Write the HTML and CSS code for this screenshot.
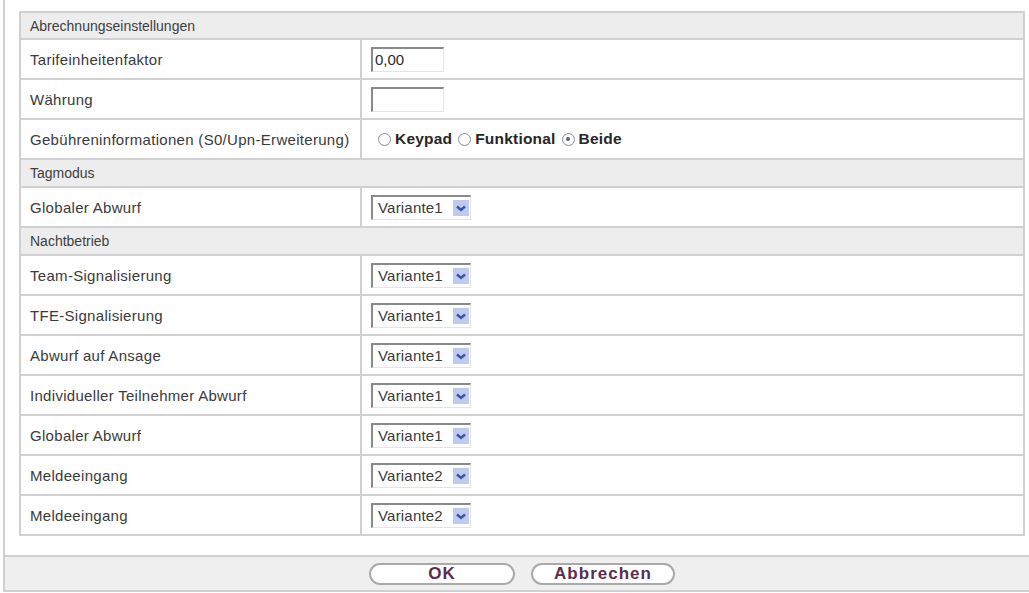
FILE: index.html
```html
<!DOCTYPE html>
<html lang="de">
<head>
<meta charset="utf-8">
<title>Abrechnungseinstellungen</title>
<link rel="stylesheet" href="styles.css">
</head>
<body>
<div class="frame">
  <div class="panel">
    <div class="form">
      <div class="section">Abrechnungseinstellungen</div>
      <div class="row">
        <div class="label">Tarifeinheitenfaktor</div>
        <div class="value"><input class="field" type="text" value="0,00"></div>
      </div>
      <div class="row">
        <div class="label">Währung</div>
        <div class="value"><input class="field" type="text" value=""></div>
      </div>
      <div class="row">
        <div class="label">Gebühreninformationen (S0/Upn-Erweiterung)</div>
        <div class="value">
          <div class="radios">
            <span class="option"><span class="radio"></span>Keypad</span>
            <span class="option"><span class="radio"></span>Funktional</span>
            <span class="option"><span class="radio checked"></span>Beide</span>
          </div>
        </div>
      </div>

      <div class="section">Tagmodus</div>
      <div class="row">
        <div class="label">Globaler Abwurf</div>
        <div class="value"><div class="select"><span>Variante1</span><span class="arrow"><svg width="16" height="16" viewBox="0 0 16 16"><path d="M4 6.5 L8 10 L12 6.5" fill="none" stroke="#3557a8" stroke-width="2.4"/></svg></span></div></div>
      </div>

      <div class="section">Nachtbetrieb</div>
      <div class="row">
        <div class="label">Team-Signalisierung</div>
        <div class="value"><div class="select"><span>Variante1</span><span class="arrow"><svg width="16" height="16" viewBox="0 0 16 16"><path d="M4 6.5 L8 10 L12 6.5" fill="none" stroke="#3557a8" stroke-width="2.4"/></svg></span></div></div>
      </div>
      <div class="row">
        <div class="label">TFE-Signalisierung</div>
        <div class="value"><div class="select"><span>Variante1</span><span class="arrow"><svg width="16" height="16" viewBox="0 0 16 16"><path d="M4 6.5 L8 10 L12 6.5" fill="none" stroke="#3557a8" stroke-width="2.4"/></svg></span></div></div>
      </div>
      <div class="row">
        <div class="label">Abwurf auf Ansage</div>
        <div class="value"><div class="select"><span>Variante1</span><span class="arrow"><svg width="16" height="16" viewBox="0 0 16 16"><path d="M4 6.5 L8 10 L12 6.5" fill="none" stroke="#3557a8" stroke-width="2.4"/></svg></span></div></div>
      </div>
      <div class="row">
        <div class="label">Individueller Teilnehmer Abwurf</div>
        <div class="value"><div class="select"><span>Variante1</span><span class="arrow"><svg width="16" height="16" viewBox="0 0 16 16"><path d="M4 6.5 L8 10 L12 6.5" fill="none" stroke="#3557a8" stroke-width="2.4"/></svg></span></div></div>
      </div>
      <div class="row">
        <div class="label">Globaler Abwurf</div>
        <div class="value"><div class="select"><span>Variante1</span><span class="arrow"><svg width="16" height="16" viewBox="0 0 16 16"><path d="M4 6.5 L8 10 L12 6.5" fill="none" stroke="#3557a8" stroke-width="2.4"/></svg></span></div></div>
      </div>
      <div class="row">
        <div class="label">Meldeeingang</div>
        <div class="value"><div class="select"><span>Variante2</span><span class="arrow"><svg width="16" height="16" viewBox="0 0 16 16"><path d="M4 6.5 L8 10 L12 6.5" fill="none" stroke="#3557a8" stroke-width="2.4"/></svg></span></div></div>
      </div>
      <div class="row">
        <div class="label">Meldeeingang</div>
        <div class="value"><div class="select"><span>Variante2</span><span class="arrow"><svg width="16" height="16" viewBox="0 0 16 16"><path d="M4 6.5 L8 10 L12 6.5" fill="none" stroke="#3557a8" stroke-width="2.4"/></svg></span></div></div>
      </div>
    </div>
  </div>
  <div class="actions">
    <button class="btn btn-ok" type="button">OK</button>
    <button class="btn btn-cancel" type="button">Abbrechen</button>
  </div>
</div>
</body>
</html>
```

FILE: styles.css
```css
html, body {
  margin: 0;
  padding: 0;
  background: #ffffff;
  overflow: hidden;
}

body {
  font-family: "Liberation Sans", Arial, sans-serif;
  color: #3a3a3a;
}

/* outer page frame */
.frame {
  margin-left: 3px;
  width: 1038px;
  box-sizing: border-box;
  border-left: 2px solid #d0d0d0;
  border-right: 2px solid #d0d0d0;
  border-bottom: 2px solid #d0d0d0;
}

.panel {
  padding: 11px 14px 19px 14px;
}

/* settings table */
.form {
  border: 2px solid #d0d0d0;
  border-bottom: none;
}

.section {
  height: 28px;
  box-sizing: border-box;
  border-bottom: 2px solid #d0d0d0;
  background: #ededed;
  padding-left: 9px;
  display: flex;
  align-items: center;
  font-size: 14px;
  color: #3e3e3e;
}

.section:first-child {
  height: 27px;
}

.row {
  display: flex;
  height: 40px;
  box-sizing: border-box;
  border-bottom: 2px solid #d0d0d0;
}

.label {
  width: 341px;
  flex: none;
  box-sizing: border-box;
  border-right: 2px solid #d0d0d0;
  padding-left: 9px;
  display: flex;
  align-items: center;
  font-size: 15px;
  letter-spacing: 0.3px;
  color: #3a3a3a;
}

.value {
  flex: 1;
  display: flex;
  align-items: center;
  padding-left: 9px;
}

/* text input */
.field {
  width: 73px;
  height: 25px;
  box-sizing: border-box;
  margin: 0;
  padding: 0 0 0 2px;
  border-top: 2px solid #8a8a8a;
  border-left: 2px solid #8a8a8a;
  border-right: 1px solid #e4e4e4;
  border-bottom: 1px solid #e4e4e4;
  background: #ffffff;
  font-family: "Liberation Sans", Arial, sans-serif;
  font-size: 15px;
  color: #2a2a2a;
  outline: none;
}

/* dropdown */
.select {
  width: 100px;
  height: 25px;
  box-sizing: border-box;
  border-top: 2px solid #8a8a8a;
  border-left: 2px solid #8a8a8a;
  border-right: 1px solid #e4e4e4;
  border-bottom: 1px solid #e4e4e4;
  padding-left: 5px;
  display: flex;
  align-items: center;
  font-size: 15px;
  letter-spacing: 0.2px;
  color: #3a3a3a;
}

.arrow {
  margin-left: auto;
  margin-right: 1px;
  width: 16px;
  height: 16px;
  background: #bfcbee;
  display: flex;
}

/* radio group */
.radios {
  display: flex;
  align-items: center;
  padding-left: 7px;
}

.option {
  display: flex;
  align-items: center;
  margin-right: 6px;
  font-weight: bold;
  font-size: 15.5px;
  letter-spacing: 0.2px;
  color: #262626;
}

.radio {
  width: 13px;
  height: 13px;
  box-sizing: border-box;
  border: 1px solid #7d8b98;
  border-radius: 50%;
  background: #ffffff;
  margin-right: 4px;
  display: flex;
  align-items: center;
  justify-content: center;
}

.radio.checked::after {
  content: "";
  width: 4px;
  height: 4px;
  border-radius: 50%;
  background: #4f6470;
}

/* button bar */
.actions {
  height: 35px;
  box-sizing: border-box;
  border-top: 2px solid #d0d0d0;
  background: #efefef;
  display: flex;
  justify-content: center;
  align-items: center;
  gap: 16px;
}

.btn {
  height: 22px;
  box-sizing: border-box;
  border: 2px solid #a9a9a9;
  border-radius: 11px;
  background: #ffffff;
  padding: 0;
  font-family: "Liberation Sans", Arial, sans-serif;
  font-weight: bold;
  font-size: 17px;
  line-height: 18px;
  letter-spacing: 1px;
  color: #5a2d4e;
}

.btn-ok {
  width: 146px;
}

.btn-cancel {
  width: 144px;
}
```
